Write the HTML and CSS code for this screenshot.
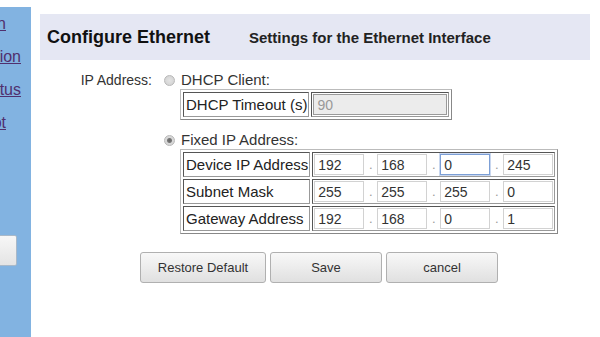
FILE: index.html
```html
<!DOCTYPE html>
<html lang="en">
<head>
    <meta charset="UTF-8">
    <meta name="viewport" content="width=device-width, initial-scale=1.0">
    <title>Configure Ethernet</title>
    <link rel="stylesheet" href="styles.css">
</head>
<body>
    <div class="page">
        <nav class="sidebar">
            <a href="#" class="nav-link short">Main</a>
            <a href="#" class="nav-link">Configuration</a>
            <a href="#" class="nav-link">Status</a>
            <a href="#" class="nav-link short">Reboot</a>
            <button class="side-button">Logout</button>
        </nav>

        <div class="content">
            <div class="title-bar">
                <h1>Configure Ethernet</h1>
                <span class="subtitle">Settings for the Ethernet Interface</span>
            </div>

            <div class="ip-form">
                <div class="field-label">IP Address:</div>
                <div class="field-options">
                    <label class="option"><input type="radio" name="ipMode" value="dhcp">DHCP Client:</label>
                    <table class="grid">
                        <tr>
                            <td class="cell-label">DHCP Timeout (s)</td>
                            <td class="cell-input"><input type="text" class="timeout" value="90" disabled></td>
                        </tr>
                    </table>

                    <label class="option fixed"><input type="radio" name="ipMode" value="fixed" checked>Fixed IP Address:</label>
                    <table class="grid">
                        <tr>
                            <td class="cell-label">Device IP Address</td>
                            <td class="cell-input">
                                <input type="text" class="octet" value="192"><span class="dot">.</span><input type="text" class="octet" value="168"><span class="dot">.</span><input type="text" class="octet focused" value="0"><span class="dot">.</span><input type="text" class="octet" value="245">
                            </td>
                        </tr>
                        <tr>
                            <td class="cell-label">Subnet Mask</td>
                            <td class="cell-input">
                                <input type="text" class="octet" value="255"><span class="dot">.</span><input type="text" class="octet" value="255"><span class="dot">.</span><input type="text" class="octet" value="255"><span class="dot">.</span><input type="text" class="octet" value="0">
                            </td>
                        </tr>
                        <tr>
                            <td class="cell-label">Gateway Address</td>
                            <td class="cell-input">
                                <input type="text" class="octet" value="192"><span class="dot">.</span><input type="text" class="octet" value="168"><span class="dot">.</span><input type="text" class="octet" value="0"><span class="dot">.</span><input type="text" class="octet" value="1">
                            </td>
                        </tr>
                    </table>
                </div>
            </div>

            <div class="actions">
                <button class="btn wide">Restore Default</button>
                <button class="btn">Save</button>
                <button class="btn">cancel</button>
            </div>
        </div>
    </div>
</body>
</html>
```

FILE: styles.css
```css
body {
    margin: 0;
    font-family: "Liberation Sans", Arial, sans-serif;
    color: #222;
    background: #fff;
}
.page {
    display: flex;
    height: 337px;
    overflow: hidden;
}
.sidebar {
    width: 31px;
    flex-shrink: 0;
    margin-top: 7px;
    background-color: #82b3e1;
    overflow: hidden;
    display: flex;
    flex-direction: column;
}
.nav-link {
    display: block;
    direction: rtl;
    white-space: nowrap;
    text-align: right;
    padding-right: 10px;
    font-size: 16px;
    line-height: 33px;
    color: #50306e;
}
.nav-link.short {
    padding-right: 25px;
}
.side-button {
    margin-top: 96px;
    margin-left: -80px;
    width: 97px;
    height: 31px;
    padding-left: 4px;
    text-align: left;
    border: 1px solid #a9b9c9;
    border-radius: 2px;
    background: linear-gradient(#f7f7f7, #e4e4e4);
    font-family: inherit;
    font-size: 13px;
}
.content {
    padding-left: 9px;
}
.title-bar {
    margin-top: 14px;
    width: 543px;
    height: 46px;
    padding-left: 7px;
    background-color: #e5e7f3;
    display: flex;
    align-items: center;
}
.title-bar h1 {
    margin: 0;
    font-size: 18px;
    color: #111;
}
.subtitle {
    margin-left: 39px;
    font-size: 15px;
    font-weight: bold;
    color: #222;
}
.ip-form {
    display: flex;
    margin-top: 11px;
    font-size: 15px;
    line-height: 18px;
}
.field-label {
    width: 112px;
    text-align: right;
    font-size: 14px;
    color: #333;
}
.field-options {
    margin-left: 12px;
}
.option {
    display: flex;
    align-items: center;
    color: #333;
}
.option.fixed {
    margin-top: 11px;
}
.option input {
    appearance: none;
    width: 11px;
    height: 11px;
    margin: 0 6px 0 0;
    border: 1px solid #b8b8b8;
    border-radius: 50%;
    background: radial-gradient(#e4e4e4, #cfcfcf);
}
.option input:checked {
    background: radial-gradient(#666 0, #777 2px, #d8d8d8 3px);
}
.grid {
    margin-left: 16px;
    border: 1px solid #999;
    border-color: #bbb #888 #888 #bbb;
    border-spacing: 2px;
}
.grid td {
    border: 1px solid #666;
    border-color: #555 #999 #999 #555;
    height: 21px;
    padding: 1px;
}
.cell-label {
    width: 121px;
    padding-left: 2px !important;
    font-size: 15px;
    color: #222;
    white-space: nowrap;
}
.cell-input {
    font-size: 0;
    white-space: nowrap;
}
.cell-input input {
    box-sizing: border-box;
    height: 21px;
    padding: 0 3px;
    border: 1px solid #d2d2d2;
    font-family: inherit;
    font-size: 14px;
    color: #333;
    vertical-align: middle;
}
.octet {
    width: 50px;
}
.octet.focused {
    border-color: #7c9fd6;
    outline: 1px solid #c9d7ef;
}
.timeout {
    width: 134px;
    background: #ececec;
    border-color: #9a9a9a !important;
    color: #999 !important;
}
.dot {
    display: inline-block;
    width: 13px;
    text-align: center;
    font-size: 13px;
    color: #999;
    vertical-align: middle;
    line-height: 21px;
}
.actions {
    display: flex;
    gap: 4px;
    margin-top: 18px;
    margin-left: 100px;
}
.btn {
    width: 112px;
    height: 31px;
    border: 1px solid #b0b0b0;
    border-radius: 3px;
    background: linear-gradient(#f8f8f8, #e0e0e0);
    font-family: inherit;
    font-size: 13px;
    color: #333;
}
.btn.wide {
    width: 126px;
}
```
